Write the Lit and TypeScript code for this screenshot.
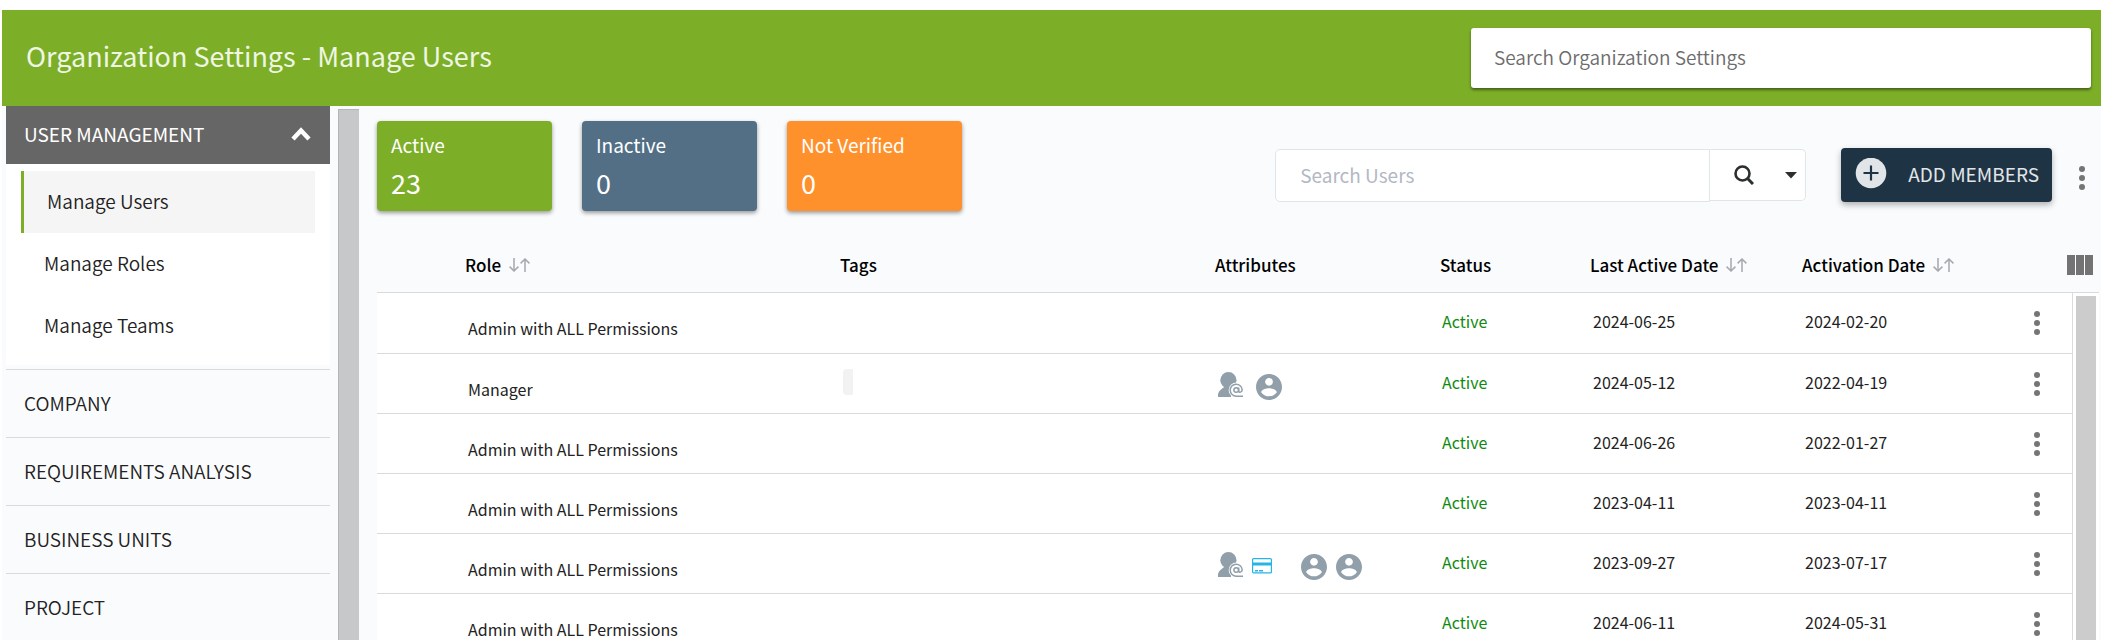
import { LitElement, html, css, nothing } from "lit";
import { customElement } from "lit/decorators.js";

type Attribute = "mention" | "card" | "gap" | "person";

interface Member {
  role: string;
  tagged?: boolean;
  attributes: Attribute[];
  status: string;
  lastActive: string;
  activation: string;
}

const ADMIN = "Admin with ALL Permissions";

const MEMBERS: Member[] = [
  { role: ADMIN, attributes: [], status: "Active", lastActive: "2024-06-25", activation: "2024-02-20" },
  { role: "Manager", tagged: true, attributes: ["mention", "person"], status: "Active", lastActive: "2024-05-12", activation: "2022-04-19" },
  { role: ADMIN, attributes: [], status: "Active", lastActive: "2024-06-26", activation: "2022-01-27" },
  { role: ADMIN, attributes: [], status: "Active", lastActive: "2023-04-11", activation: "2023-04-11" },
  { role: ADMIN, attributes: ["mention", "card", "gap", "person", "person"], status: "Active", lastActive: "2023-09-27", activation: "2023-07-17" },
  { role: ADMIN, attributes: [], status: "Active", lastActive: "2024-06-11", activation: "2024-05-31" },
];

const STATS = [
  { label: "Active", value: 23, tone: "green" },
  { label: "Inactive", value: 0, tone: "blue" },
  { label: "Not Verified", value: 0, tone: "orange" },
];

const SECTIONS = ["COMPANY", "REQUIREMENTS ANALYSIS", "BUSINESS UNITS", "PROJECT"];

const dots = html`<svg width="6" height="24" viewBox="0 0 6 24" aria-hidden="true">
  <g fill="#757575"><circle cx="3" cy="3" r="3" /><circle cx="3" cy="12" r="3" /><circle cx="3" cy="21" r="3" /></g>
</svg>`;

const sortIcon = html`<svg class="sort" width="21" height="14" viewBox="0 0 21 14" aria-hidden="true">
  <g fill="none" stroke="#a3abac" stroke-width="1.5">
    <path d="M5 0V13M0.6 8.6L5 13L9.4 8.6" /><path d="M16 14V1M11.6 5.4L16 1L20.4 5.4" />
  </g>
</svg>`;

const attributeIcon = (kind: Attribute) => {
  switch (kind) {
    case "mention":
      return html`<svg class="mention" width="26" height="26" viewBox="0 0 26 26" role="img" aria-label="Mention">
        <g fill="#909fa9">
          <ellipse cx="10.4" cy="8.2" rx="8.1" ry="8.2" />
          <path d="M7 14h7v5h-1v6H0v-1.500C0 19.500 3 17 7 14.500z" />
        </g>
        <circle cx="18.300" cy="18.200" r="7.600" fill="#fff" />
        <path d="M17 18h9v8h-9z" fill="#fff" />
        <g fill="none" stroke="#909fa9" stroke-width="1.500">
          <circle cx="18.200" cy="18" r="2.300" />
          <path d="M20.700 15.500v3.700c0 1.600 3.500 1.300 3.500-1.400a6 6 0 1 0-6 6.400H25" />
        </g>
      </svg>`;
    case "card":
      return html`<svg class="card" width="20" height="16" viewBox="0 0 20 16" role="img" aria-label="Card">
        <rect x="0.600" y="0.600" width="18.800" height="14.300" rx="1" fill="none" stroke="#25b4e6" stroke-width="1.200" />
        <path d="M0 4.500h20v3H0zM3 12h3v1.500H3zM7 12h4v1.500H7z" fill="#25b4e6" />
      </svg>`;
    case "person":
      return html`<svg class="person" width="26" height="26" viewBox="2 2 20 20" role="img" aria-label="Profile">
        <path fill="#909fa9" d="M12 2C6.480 2 2 6.480 2 12s4.480 10 10 10 10-4.480 10-10S17.520 2 12 2zm0 3c1.660 0 3 1.340 3 3s-1.340 3-3 3-3-1.340-3-3 1.340-3 3-3zm0 14.200c-2.500 0-4.710-1.280-6-3.220.03-1.990 4-3.080 6-3.080 1.990 0 5.970 1.090 6 3.080-1.290 1.940-3.500 3.220-6 3.220z" />
      </svg>`;
    default:
      return html`<span class="gap"></span>`;
  }
};

@customElement("app-root")
export class AppRoot extends LitElement {
  static styles = css`
    :host {
      display: flex;
      flex-direction: column;
      box-sizing: border-box;
      height: 100vh;
      overflow: hidden;
      padding: 10px 0 0 2px;
      background: #fff;
      color: #222;
      font: 400 19px/24px "Noto Sans CJK SC", "Source Sans Pro", sans-serif;
    }
    *, *::before, *::after { box-sizing: border-box; }
    a { color: inherit; text-decoration: none; }
    button, input { font: inherit; color: inherit; margin: 0; padding: 0; border: 0; background: none; }
    svg { display: block; flex: none; }
    h1, ul, dl, dt, dd { margin: 0; padding: 0; font-weight: inherit; list-style: none; }

    .top {
      display: flex;
      flex: none;
      align-items: center;
      justify-content: space-between;
      height: 96px;
      padding: 0 10px 0 24px;
      background: #7cae28;
    }
    .top h1 { padding-bottom: 4px; font-size: 27px; line-height: 40px; color: #eff6e3; }
    .settings-search {
      width: 620px;
      height: 60px;
      padding: 0 23px 4px;
      border-radius: 3px;
      background: #fff;
      font-weight: 350;
      box-shadow: 0 2px 3px rgba(0, 0, 0, 0.45);
    }
    .settings-search::placeholder { color: #6c6c6c; opacity: 1; }

    .body { display: flex; flex: 1; min-height: 0; background: #fafbfd; }
    .side { flex: none; width: 324px; margin-left: 4px; font-weight: 350; }
    .group {
      display: flex;
      align-items: center;
      justify-content: space-between;
      width: 100%;
      height: 58px;
      padding: 0 19px 2px 18px;
      background: #666;
      color: #fff;
      font-weight: 400;
    }
    .links { height: 201px; padding: 7px 15px 0; background: #fff; }
    .links a { display: flex; align-items: center; height: 62px; padding: 0 0 2px 23px; }
    .links a.on { border-left: 3px solid #7cae28; background: #f5f5f5; }
    .sections { margin-top: 4px; }
    .sections a {
      display: flex;
      align-items: center;
      height: 68px;
      padding: 0 18px 2px;
      border-top: 1px solid #d8dadc;
    }
    .side-bar {
      flex: none;
      width: 21px;
      margin: 3px 0 0 8px;
      border: 1px solid #b5b6b8;
      border-width: 1px 0 0 1px;
      background: #c7c8ca;
    }

    .main { flex: 1; min-width: 0; padding: 15px 2px 0 18px; }
    .tools { display: flex; align-items: flex-start; height: 117px; }
    .stats { display: flex; gap: 30px; }
    .stat {
      width: 175px;
      height: 90px;
      padding: 12px 14px;
      border-radius: 4px;
      color: #fff;
      box-shadow: 0 2px 4px rgba(0, 0, 0, 0.4);
    }
    .stat dd { margin-top: 10px; font-size: 27px; line-height: 32px; }
    .green { background: #7cae28; }
    .blue { background: #526f86; }
    .orange { background: #ff912c; }

    .find { display: flex; margin: 28px 0 0 auto; }
    .find input {
      width: 435px;
      height: 53px;
      padding: 0 24px 2px;
      border: 1px solid #dfe6e9;
      border-radius: 5px 0 0 5px;
      background: #fff;
    }
    .find input::placeholder { color: #b3b7c4; opacity: 1; }
    .find button {
      display: flex;
      align-items: center;
      justify-content: center;
      height: 52px;
      border: 1px solid #dfe6e9;
      border-width: 1px 0;
      background: #fff;
    }
    .find .go { width: 67px; }
    .find .more { width: 29px; border-right-width: 1px; border-radius: 0 5px 5px 0; }
    .add {
      display: flex;
      align-items: center;
      gap: 21px;
      height: 54px;
      margin: 27px 0 0 35px;
      padding: 0 13px 2px 14px;
      border-radius: 4px;
      background: #1e3344;
      color: #e1e5e8;
      white-space: nowrap;
      box-shadow: 0 3px 6px rgba(0, 0, 0, 0.3);
    }
    .menu { margin: 45px 14px 0 27px; }

    table { width: 100%; border-collapse: separate; border-spacing: 0; table-layout: fixed; }
    th, td { padding: 0; text-align: left; font-weight: inherit; vertical-align: top; border-bottom: 1px solid #d8dadc; }
    th {
      height: 55px;
      padding: 15px 0 0 10px;
      color: #000;
      font-size: 17px;
      font-weight: 500;
      white-space: nowrap;
    }
    .head { display: flex; align-items: center; gap: 8px; }
    .columns { display: block; margin-left: auto; padding: 2px 6px 0 0; }
    tbody { background: #fff; font-size: 16px; }
    td { height: 60px; padding: 16px 0 0 13px; white-space: nowrap; }
    tr:first-child td { height: 61px; }
    td.role { padding-top: 23px; }
    td.status { padding-left: 12px; color: #108a10; }
    td.tags { padding-top: 15px; }
    td.attrs { padding-top: 18px; }
    .tag { display: block; width: 10px; height: 26px; border-radius: 4px 0 0 4px; background: #f2f2f2; }
    .icons { display: flex; align-items: flex-start; }
    .person { margin: 2px 9px 0 0; }
    .mention { margin-right: 12px; }
    .mention + .card { margin: 6px 0 0 -4px; }
    .gap { width: 29px; }
    td.act button { display: block; margin: 2px 0 0 16px; }
    td.gutter {
      padding: 3px 3px 0;
      border-bottom: 0;
      border-left: 1px solid #dcdcdc;
      background: #ccc content-box;
    }
  `;

  render() {
    return html`
      <header class="top">
        <h1>Organization Settings - Manage Users</h1>
        <input class="settings-search" type="search" placeholder="Search Organization Settings" aria-label="Search Organization Settings" />
      </header>
      <div class="body">
        <nav class="side" aria-label="Organization settings">
          <button class="group" aria-expanded="true">
            USER MANAGEMENT
            <svg width="20" height="14" viewBox="0 0 20 14" aria-hidden="true"><path d="M2 12L10 3.500L18 12" fill="none" stroke="#fff" stroke-width="4.500" /></svg>
          </button>
          <ul class="links">
            <li><a class="on" href="#users" aria-current="page">Manage Users</a></li>
            <li><a href="#roles">Manage Roles</a></li>
            <li><a href="#teams">Manage Teams</a></li>
          </ul>
          <ul class="sections">
            ${SECTIONS.map((name) => html`<li><a href="#section">${name}</a></li>`)}
          </ul>
        </nav>
        <div class="side-bar" aria-hidden="true"></div>
        <main class="main">
          <div class="tools">
            <div class="stats">
              ${STATS.map((s) => html`<dl class="stat ${s.tone}"><dt>${s.label}</dt><dd>${s.value}</dd></dl>`)}
            </div>
            <form class="find" @submit=${(e: Event) => e.preventDefault()}>
              <input type="search" placeholder="Search Users" aria-label="Search Users" />
              <button class="go" aria-label="Search">
                <svg width="20" height="20" viewBox="0 0 20 20" aria-hidden="true">
                  <circle cx="8.500" cy="8.500" r="7" fill="none" stroke="#2b2f30" stroke-width="2.600" />
                  <path d="M13.300 13.300L19 19" stroke="#2b2f30" stroke-width="3" />
                </svg>
              </button>
              <button class="more" type="button" aria-label="Search options">
                <svg width="12" height="7" viewBox="0 0 12 7" aria-hidden="true"><path d="M0 0h12L6 6.500z" fill="#2b2f30" /></svg>
              </button>
            </form>
            <button class="add">
              <svg width="32" height="32" viewBox="0 0 32 32" aria-hidden="true">
                <circle cx="16" cy="15" r="15.300" fill="#e1e5e8" />
                <path d="M16 7.500v15M8.500 15h15" stroke="#1e3344" stroke-width="2.200" />
              </svg>
              ADD MEMBERS
            </button>
            <button class="menu" aria-label="More actions">${dots}</button>
          </div>
          <table>
            <colgroup>
              <col width="78" /><col width="375" /><col width="375" /><col width="225" /><col width="150" />
              <col width="212" /><col width="213" /><col width="67" /><col width="27" />
            </colgroup>
            <thead>
              <tr>
                <th></th>
                <th><span class="head">Role ${sortIcon}</span></th>
                <th>Tags</th>
                <th>Attributes</th>
                <th>Status</th>
                <th><span class="head">Last Active Date ${sortIcon}</span></th>
                <th><span class="head">Activation Date ${sortIcon}</span></th>
                <th colspan="2">
                  <button class="columns" aria-label="Choose columns">
                    <svg width="26" height="20" viewBox="0 0 26 20" aria-hidden="true"><path d="M0 0h8v20H0zM9 0h8v20H9zM18 0h8v20h-8z" fill="#737373" /></svg>
                  </button>
                </th>
              </tr>
            </thead>
            <tbody>
              ${MEMBERS.map(
                (m, i) => html`<tr>
                  <td></td>
                  <td class="role">${m.role}</td>
                  <td class="tags">${m.tagged ? html`<span class="tag"></span>` : nothing}</td>
                  <td class="attrs"><div class="icons">${m.attributes.map(attributeIcon)}</div></td>
                  <td class="status">${m.status}</td>
                  <td>${m.lastActive}</td>
                  <td>${m.activation}</td>
                  <td class="act"><button aria-label="Row actions">${dots}</button></td>
                  ${i === 0 ? html`<td class="gutter" rowspan=${MEMBERS.length}></td>` : nothing}
                </tr>`
              )}
            </tbody>
          </table>
        </main>
      </div>
    `;
  }
}
